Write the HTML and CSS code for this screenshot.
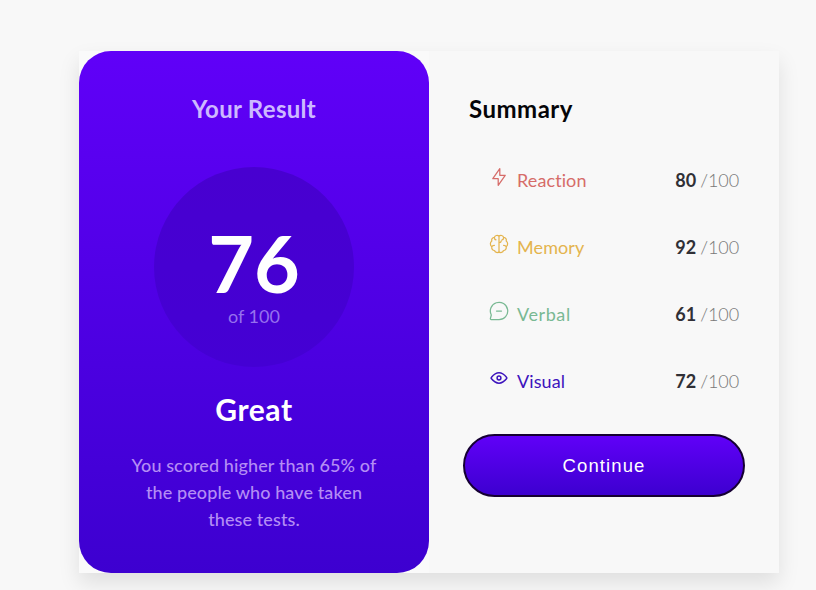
FILE: index.html
```html
<!DOCTYPE html>
<html lang="en">
<head>
<meta charset="utf-8">
<title>Results summary</title>
<link rel="stylesheet" href="styles.css">
</head>
<body>
<main class="card">
  <section class="result">
    <h2 class="result-title">Your Result</h2>
    <div class="circle">
      <strong class="score">76</strong>
      <span class="out-of">of 100</span>
    </div>
    <h1 class="grade">Great</h1>
    <p class="description">You scored higher than 65% of<br>the people who have taken<br>these tests.</p>
  </section>
  <section class="summary">
    <h2 class="summary-title">Summary</h2>
    <ul class="rows">
      <li class="row reaction">
        <svg class="icon" viewBox="0 0 20 20"><path d="M10.8 8.3V1.700l-7 10h5.400v6.600l7-10z"/></svg>
        <span class="name">Reaction</span><b>80</b><span class="total">/100</span>
      </li>
      <li class="row memory">
        <svg class="icon" viewBox="0 0 20 20"><path d="M10 1.500v17M10 2.200C8.500.8 6 1.300 5.400 3.400 3.300 3.500 2.200 5.300 2.800 7 .9 8.200.9 11.500 2.800 12.700c-.5 2 .8 3.700 2.700 3.800.6 2.200 3.200 2.600 4.500 1.200M10 2.200c1.500-1.400 4-.9 4.600 1.200 2.100.1 3.200 1.900 2.600 3.600 1.900 1.200 1.900 4.500 0 5.700.5 2-.8 3.700-2.700 3.800-.6 2.200-3.200 2.600-4.500 1.200M5.400 3.400c0 1.300.6 2.200 1.600 2.500M2.800 12.700c.5-1 1.400-1.500 2.600-1.400M14.600 3.400c0 1.300-.6 2.200-1.600 2.500M17.200 12.700c-.5-1-1.400-1.500-2.600-1.400M10 8.800c1.300 0 2.200-.7 2.300-1.900"/></svg>
        <span class="name">Memory</span><b>92</b><span class="total">/100</span>
      </li>
      <li class="row verbal">
        <svg class="icon" viewBox="0 0 20 20"><path d="M7.500 10h5M10 18.700A8.700 8.700 0 1 0 2.300 14l-.9 3.500c-.2.800.3 1.200 1 1z"/></svg>
        <span class="name">Verbal</span><b>61</b><span class="total">/100</span>
      </li>
      <li class="row visual">
        <svg class="icon" viewBox="0 0 20 20"><circle cx="10" cy="10" r="1.900"/><path d="M17.500 9.200c.5.500.5 1.100 0 1.600-1.400 1.700-4.200 4.400-7.500 4.400s-6.100-2.700-7.500-4.400c-.5-.5-.5-1.100 0-1.600C3.900 7.500 6.700 4.800 10 4.800s6.100 2.700 7.500 4.400z"/></svg>
        <span class="name">Visual</span><b>72</b><span class="total">/100</span>
      </li>
    </ul>
    <button class="continue">Continue</button>
  </section>
</main>
</body>
</html>
```
FILE: styles.css
```css
* { box-sizing: border-box; }
body {
  margin: 0;
  height: 590px;
  padding: 51px 37px 0 79px;
  overflow: hidden;
  background: #f8f8f8;
  font-family: Lato, sans-serif;
  font-variant-ligatures: none;
}
h1, h2, p, ul { margin: 0; padding: 0; }
.card {
  display: flex;
  width: 700px;
  height: 522px;
  background: #fafafa;
  box-shadow: 0 10px 20px rgba(0, 0, 0, .1);
}
.result {
  width: 350px;
  padding-top: 42px;
  display: flex;
  flex-direction: column;
  align-items: center;
  border-radius: 32px;
  background: linear-gradient(#6000f8, #3d00d0);
  color: #fff;
  text-align: center;
}
.result-title {
  font-size: 24px;
  line-height: 32px;
  letter-spacing: .3px;
  color: #cdb9ff;
}
.circle {
  width: 200px;
  height: 200px;
  margin-top: 42px;
  padding-top: 55px;
  display: flex;
  flex-direction: column;
  align-items: center;
  border-radius: 50%;
  background: linear-gradient(#4800d0, #4400d4);
}
.score { font-size: 79px; line-height: 81px; font-weight: 700; }
.out-of { font-size: 18px; line-height: 26px; color: #9670ee; }
.grade { margin-top: 22px; font-size: 30px; line-height: 40px; letter-spacing: .6px; }
.description {
  margin-top: 23px;
  font-size: 18px;
  line-height: 27px;
  font-weight: 500;
  letter-spacing: .1px;
  color: #b48df4;
}
.summary { width: 350px; padding: 42px 34px 0; background: #f8f8f8; }
.summary-title { padding-left: 6px; font-size: 24px; line-height: 32px; letter-spacing: .5px; color: #050508; }
.rows { margin-top: 38px; list-style: none; }
.row {
  display: flex;
  align-items: center;
  height: 36px;
  margin-bottom: 31px;
  padding: 0 6px 2px 26px;
  font-size: 18px;
}
.icon {
  width: 20px;
  height: 20px;
  margin: 0 8px 6px 0;
  fill: none;
  stroke: currentColor;
  stroke-width: 1.25;
  stroke-linecap: round;
  stroke-linejoin: round;
}
.name { flex: 1; letter-spacing: .1px; }
.row b { margin-right: 4px; color: #303036; }
.total { color: #777; font-weight: 300; letter-spacing: -.1px; }
.reaction { color: #d66c69; }
.memory { color: #e4b44e; }
.verbal { color: #79b993; }
.verbal .name { letter-spacing: .6px; }
.visual { color: #3d14bd; }
.visual .icon { stroke-width: 1.500; }
.continue {
  display: block;
  width: 282px;
  height: 63px;
  margin-top: 34px;
  padding: 0;
  border: 2px solid #160033;
  border-radius: 32px;
  background: linear-gradient(#6000f8, #3d00d0);
  color: #fff;
  font: 18.500px "Liberation Sans", sans-serif;
  letter-spacing: 1.100px;
}
```
